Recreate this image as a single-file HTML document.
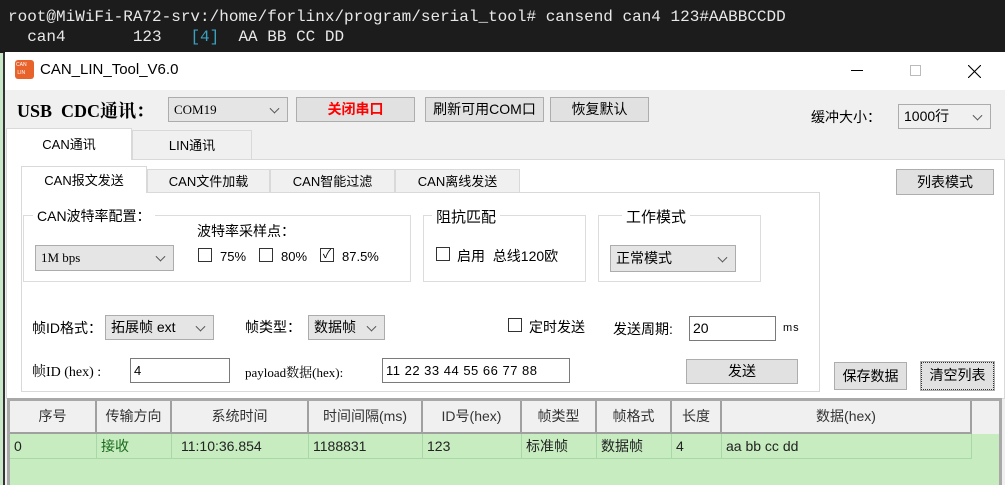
<!DOCTYPE html>
<html><head><meta charset="utf-8"><style>
*{margin:0;padding:0;box-sizing:border-box}
body{width:1005px;height:485px;overflow:hidden;position:relative;background:#f0f0f0;font-family:"Liberation Sans","Noto Sans CJK SC",sans-serif;font-size:13px;color:#000}
.a{position:absolute;white-space:nowrap}
.term{left:0;top:0;width:1005px;height:53px;background:#1c1c1c;font-family:"Liberation Mono","DejaVu Sans Mono",monospace;font-size:16px;color:#e8e8e8}
.btn{position:absolute;background:#e1e1e1;border:1px solid #adadad;text-align:center;font-size:14px}
.cmb{position:absolute;background:#e5e5e5;border:1px solid #acacac;font-size:13px;padding-left:5px}
.cmb:after{content:"";position:absolute;right:9px;top:50%;width:6px;height:6px;border-right:1px solid #555;border-bottom:1px solid #555;transform:translateY(-70%) rotate(45deg)}
.inp{position:absolute;background:#fff;border:1px solid #7a7a7a;padding-left:3px;font-size:13px}
.grp{position:absolute;border:1px solid #dcdcdc}
.cb{position:absolute;width:14px;height:14px;border:1px solid #333;background:#fff}
.tab{position:absolute;border:1px solid #d9d9d9;border-bottom:none;background:#f0f0f0;text-align:center;font-size:13px}
.th{position:absolute;top:401px;height:33px;border-right:2px solid #a0a0a0;border-bottom:2px solid #a0a0a0;text-align:center;line-height:31px;font-size:14px;color:#333}
.td{position:absolute;top:434px;height:25px;border-right:1px solid #a8d8a8;border-bottom:1px solid #a8d8a8;line-height:24px;font-size:14px;padding-left:4px;color:#222}
</style></head><body>
<div class="a term"><div class="a" style="left:8px;top:8px">root@MiWiFi-RA72-srv:/home/forlinx/program/serial_tool# cansend can4 123#AABBCCDD</div>
<div class="a" style="left:8px;top:28px">&nbsp;&nbsp;can4&nbsp;&nbsp;&nbsp;&nbsp;&nbsp;&nbsp;&nbsp;123&nbsp;&nbsp;&nbsp;<span style="color:#3aa0c0">[4]</span>&nbsp;&nbsp;AA BB CC DD</div></div>
<div class="a" style="left:0;top:53px;width:5px;height:432px;background:#c8e8c8;border-right:2px solid #333"></div>
<div class="a" style="left:5px;top:52px;width:1000px;height:38px;background:#fff"></div>
<div class="a" style="left:15px;top:60px;width:19px;height:19px;background:#e8622c;border-radius:3px;font-size:5px;color:#fff;line-height:8px;padding:1px">CAN<br>&nbsp;LIN</div>
<div class="a" style="left:40px;top:61px;font-size:15px">CAN_LIN_Tool_V6.0</div>
<div class="a" style="left:851px;top:70px;width:12px;height:1px;background:#000"></div>
<div class="a" style="left:910px;top:65px;width:11px;height:11px;border:1px solid #bbb"></div>
<svg class="a" style="left:968px;top:65px" width="13" height="13"><path d="M0 0L13 13M13 0L0 13" stroke="#000" stroke-width="1.1"/></svg>

<div class="a" style="left:17px;top:97px;font-family:'Liberation Serif','Noto Serif CJK SC',serif;font-weight:bold;font-size:18px">USB&nbsp; CDC通讯：</div>
<div class="cmb" style="left:168px;top:97px;width:120px;height:25px;line-height:23px;font-family:'Liberation Serif','Noto Serif CJK SC',serif">COM19</div>
<div class="btn" style="left:296px;top:97px;width:119px;height:25px;line-height:23px;color:#f00;font-weight:bold">关闭串口</div>
<div class="btn" style="left:425px;top:97px;width:119px;height:25px;line-height:23px">刷新可用COM口</div>
<div class="btn" style="left:550px;top:97px;width:99px;height:25px;line-height:23px">恢复默认</div>
<div class="a" style="left:811px;top:107px;font-size:14px">缓冲大小：</div>
<div class="cmb" style="left:898px;top:104px;width:93px;height:25px;line-height:23px;background:#f0f0f0;font-size:14px">1000行</div>

<div class="a" style="left:6px;top:159px;width:999px;height:240px;background:#fff;border:1px solid #d9d9d9"></div>
<div class="tab" style="left:6px;top:128px;width:126px;height:32px;background:#fff;line-height:32px">CAN通讯</div>
<div class="tab" style="left:132px;top:130px;width:120px;height:29px;line-height:29px">LIN通讯</div>
<div class="a" style="left:21px;top:192px;width:799px;height:200px;border:1px solid #d9d9d9;background:#fff"></div>
<div class="tab" style="left:21px;top:166px;width:126px;height:27px;background:#fff;line-height:28px">CAN报文发送</div>
<div class="tab" style="left:147px;top:169px;width:123px;height:23px;line-height:24px">CAN文件加载</div>
<div class="tab" style="left:270px;top:169px;width:125px;height:23px;line-height:24px">CAN智能过滤</div>
<div class="tab" style="left:395px;top:169px;width:125px;height:23px;line-height:24px">CAN离线发送</div>
<div class="btn" style="left:896px;top:169px;width:98px;height:26px;line-height:24px">列表模式</div>

<div class="grp" style="left:23px;top:215px;width:388px;height:67px"></div>
<div class="a" style="left:33px;top:206px;background:#fff;padding:0 4px;font-size:14px">CAN波特率配置：</div>
<div class="a" style="left:197px;top:221px;font-size:14px">波特率采样点：</div>
<div class="cmb" style="left:35px;top:245px;width:139px;height:26px;line-height:24px;font-family:'Liberation Serif',serif">1M bps</div>
<div class="cb" style="left:198px;top:248px"></div><div class="a" style="left:220px;top:249px">75%</div>
<div class="cb" style="left:259px;top:248px"></div><div class="a" style="left:281px;top:249px">80%</div>
<div class="cb" style="left:320px;top:248px;font-size:12px;line-height:11px;text-align:center">✓</div><div class="a" style="left:342px;top:249px">87.5%</div>

<div class="grp" style="left:423px;top:215px;width:163px;height:67px"></div>
<div class="a" style="left:432px;top:206px;background:#fff;padding:0 4px;font-size:15px">阻抗匹配</div>
<div class="cb" style="left:436px;top:247px"></div><div class="a" style="left:457px;top:246px;font-size:14px">启用&nbsp; 总线120欧</div>

<div class="grp" style="left:598px;top:215px;width:163px;height:67px"></div>
<div class="a" style="left:622px;top:206px;background:#fff;padding:0 4px;font-size:15px">工作模式</div>
<div class="cmb" style="left:610px;top:245px;width:126px;height:27px;line-height:25px;font-size:14px">正常模式</div>

<div class="a" style="left:32px;top:318px;font-size:14px">帧ID格式：</div>
<div class="cmb" style="left:105px;top:315px;width:109px;height:25px;line-height:23px;font-size:14px">拓展帧 ext</div>
<div class="a" style="left:245px;top:317px;font-size:14px">帧类型：</div>
<div class="cmb" style="left:308px;top:315px;width:77px;height:25px;line-height:23px;font-size:14px">数据帧</div>
<div class="cb" style="left:508px;top:318px"></div><div class="a" style="left:529px;top:317px;font-size:14px">定时发送</div>
<div class="a" style="left:613px;top:319px;font-size:14px">发送周期:</div>
<div class="inp" style="left:689px;top:316px;width:87px;height:25px;line-height:23px;font-size:14px">20</div>
<div class="a" style="left:783px;top:322px;font-size:11px;letter-spacing:1px">ms</div>
<div class="a" style="left:32px;top:361px;font-size:14px;font-family:'Liberation Serif','Noto Serif CJK SC',serif">帧ID (hex) :</div>
<div class="inp" style="left:130px;top:358px;width:100px;height:25px;line-height:23px">4</div>
<div class="a" style="left:245px;top:362px;font-family:'Liberation Serif','Noto Serif CJK SC',serif;font-size:13px">payload数据(hex):</div>
<div class="inp" style="left:382px;top:358px;width:188px;height:25px;line-height:23px;letter-spacing:.5px">11 22 33 44 55 66 77 88</div>
<div class="btn" style="left:686px;top:359px;width:112px;height:25px;line-height:23px">发送</div>
<div class="btn" style="left:834px;top:362px;width:73px;height:28px;line-height:26px">保存数据</div>
<div class="btn" style="left:921px;top:362px;width:73px;height:28px;line-height:24px;border:1px dotted #333;outline:1px solid #adadad">清空列表</div>

<div class="a" style="left:7px;top:398px;width:995px;height:87px;background:#c6ecc0;border:3px solid #a8a8a8;border-bottom:none"></div>
<div class="a" style="left:10px;top:401px;width:989px;height:33px;background:#f0f0f0"></div>
<div class="th" style="left:10px;width:87px">序号</div>
<div class="th" style="left:97px;width:75px">传输方向</div>
<div class="th" style="left:172px;width:137px">系统时间</div>
<div class="th" style="left:309px;width:114px">时间间隔(ms)</div>
<div class="th" style="left:423px;width:99px">ID号(hex)</div>
<div class="th" style="left:522px;width:75px">帧类型</div>
<div class="th" style="left:597px;width:75px">帧格式</div>
<div class="th" style="left:672px;width:50px">长度</div>
<div class="th" style="left:722px;width:250px">数据(hex)</div>
<div class="td" style="left:10px;width:87px">0</div>
<div class="td" style="left:97px;width:75px;color:#1a6a1a">接收</div>
<div class="td" style="left:172px;width:137px;padding-left:9px">11:10:36.854</div>
<div class="td" style="left:309px;width:114px">1188831</div>
<div class="td" style="left:423px;width:99px">123</div>
<div class="td" style="left:522px;width:75px">标准帧</div>
<div class="td" style="left:597px;width:75px">数据帧</div>
<div class="td" style="left:672px;width:50px">4</div>
<div class="td" style="left:722px;width:250px">aa bb cc dd</div>
</body></html>
